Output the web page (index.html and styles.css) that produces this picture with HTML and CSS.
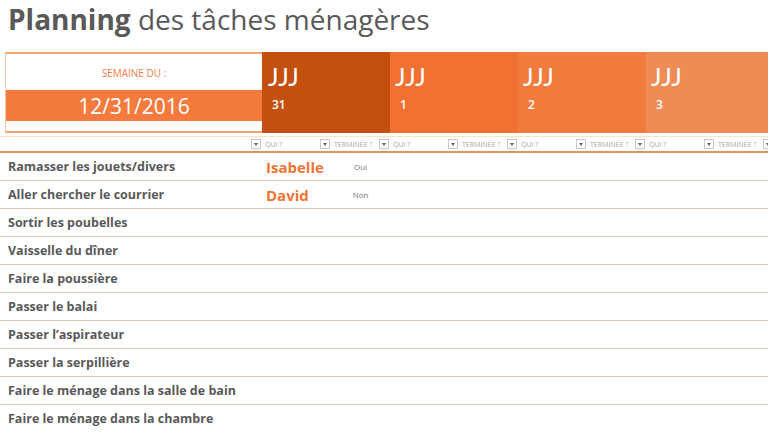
FILE: index.html
```html
<!DOCTYPE html>
<html lang="fr">
<head>
<meta charset="utf-8">
<title>Planning des tâches ménagères</title>
<link rel="stylesheet" href="styles.css">
</head>
<body>
<div class="page">
  <h1 class="title"><b>Planning</b> des tâches ménagères</h1>

  <div class="header">
    <div class="week">
      <div class="week-label">SEMAINE DU :</div>
      <div class="week-date">12/31/2016</div>
      <div class="week-gap"></div>
    </div>
    <div class="day d1"><div class="day-name">JJJ</div><div class="day-num">31</div></div>
    <div class="day d2"><div class="day-name">JJJ</div><div class="day-num">1</div></div>
    <div class="day d3"><div class="day-name">JJJ</div><div class="day-num">2</div></div>
    <div class="day d4"><div class="day-name">JJJ</div><div class="day-num">3</div></div>
  </div>

  <div class="filters">
    <div class="fcell task-col"><span class="dd"></span></div>
    <div class="fcell qui"><span class="flabel">QUI ?</span><span class="dd"></span></div>
    <div class="fcell done"><span class="flabel">TERMINÉE ?</span><span class="dd"></span></div>
    <div class="fcell qui"><span class="flabel">QUI ?</span><span class="dd"></span></div>
    <div class="fcell done"><span class="flabel">TERMINÉE ?</span><span class="dd"></span></div>
    <div class="fcell qui"><span class="flabel">QUI ?</span><span class="dd"></span></div>
    <div class="fcell done"><span class="flabel">TERMINÉE ?</span><span class="dd"></span></div>
    <div class="fcell qui"><span class="flabel">QUI ?</span><span class="dd"></span></div>
    <div class="fcell done"><span class="flabel">TERMINÉE ?</span><span class="dd"></span></div>
  </div>

  <div class="rows">
    <div class="row"><div class="task">Ramasser les jouets/divers</div><div class="who">Isabelle</div><div class="status">Oui</div></div>
    <div class="row"><div class="task">Aller chercher le courrier</div><div class="who">David</div><div class="status">Non</div></div>
    <div class="row"><div class="task">Sortir les poubelles</div></div>
    <div class="row"><div class="task">Vaisselle du dîner</div></div>
    <div class="row"><div class="task">Faire la poussière</div></div>
    <div class="row"><div class="task">Passer le balai</div></div>
    <div class="row"><div class="task">Passer l’aspirateur</div></div>
    <div class="row"><div class="task">Passer la serpillière</div></div>
    <div class="row"><div class="task">Faire le ménage dans la salle de bain</div></div>
    <div class="row"><div class="task">Faire le ménage dans la chambre</div></div>
  </div>
</div>
</body>
</html>
```

FILE: styles.css
```css
* { box-sizing: border-box; }
html, body { margin: 0; padding: 0; background: #fff; }
body { font-family: "Open Sans", "DejaVu Sans", sans-serif; color: #595959; }
.page { width: 768px; height: 432px; overflow: hidden; }

.title {
  margin: 0;
  height: 52px;
  padding: 1px 0 0 8px;
  font-size: 28px;
  font-weight: 400;
  line-height: 36px;
  color: #595959;
  white-space: nowrap;
}
.title b { font-weight: 700; }

.header { display: flex; height: 81px; padding-left: 5px; }
.week {
  width: 257px;
  flex: none;
  border-left: 1px solid #f2c4a8;
  border-top: 2px solid #f2a676;
  border-bottom: 2px solid #f2a676;
  display: flex;
  flex-direction: column;
}
.week-label {
  height: 36px;
  display: flex; align-items: center; justify-content: center;
  font-size: 10px;
  color: #ee7d45;
  padding-top: 2px;
}
.week-date {
  height: 31px;
  background: #f47a3e;
  color: #fff;
  font-size: 21px;
  display: flex; align-items: center; justify-content: center;
}
.week-gap { flex: 1; }

.day { width: 128px; flex: none; color: #fff; }
.d1 { background: #c4500f; }
.d2 { background: #f07131; }
.d3 { background: #f27c3e; }
.d4 { background: #f08b55; }
.day-name {
  font-family: "Lato", "Open Sans", sans-serif;
  font-size: 25px;
  line-height: 30px;
  padding: 9px 0 0 5px;
  height: 45px;
}
.day-num { font-size: 12px; font-weight: 600; padding-left: 10px; line-height: 16px; }
.d1 .day-name { padding-left: 6px; }
.d1 .day-num { padding-left: 10px; }

.filters {
  display: flex;
  margin-top: 3px;
  height: 17px;
  border-top: 1px solid #fbe3d3;
  border-bottom: 2px solid #e9935e;
  align-items: center;
}
.fcell { display: flex; align-items: center; flex: none; height: 14px; padding-right: 1px; }
.task-col { width: 262px; justify-content: flex-end; }
.qui { width: 69px; }
.done { width: 59px; }
.flabel { font-size: 7px; color: #a6a6a6; padding-left: 3px; flex: 1; white-space: nowrap; }
.dd {
  width: 10px; height: 10px; flex: none;
  border: 1px solid #c8c8c8;
  background: #fff;
  position: relative;
}
.dd::after {
  content: "";
  position: absolute;
  left: 2px; top: 3px;
  border-left: 2px solid transparent;
  border-right: 2px solid transparent;
  border-top: 3px solid #606060;
}

.rows { display: flex; flex-direction: column; }
.row {
  display: flex;
  align-items: center;
  height: 28px;
  border-bottom: 1px solid #e2cbb6;
}
.task { width: 262px; flex: none; padding-left: 8px; font-size: 12.5px; font-weight: 700; color: #595959; white-space: nowrap; }
.who { width: 69px; flex: none; padding-left: 4px; font-size: 15px; font-weight: 700; color: #ee7434; }
.status { width: 59px; flex: none; text-align: center; font-size: 8px; color: #777; }
```
